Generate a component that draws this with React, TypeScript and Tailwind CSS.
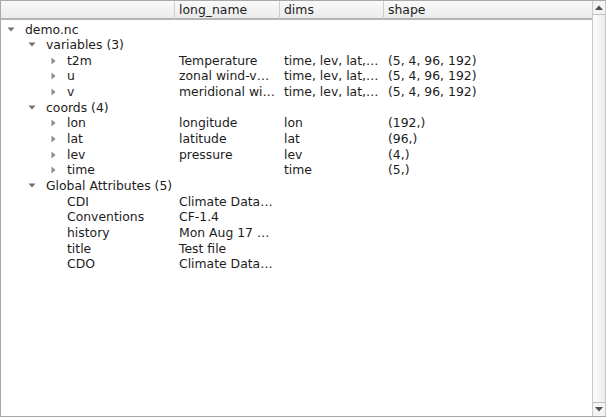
const font = { fontFamily: '"DejaVu Sans", Verdana, sans-serif' };

type Row = {
  depth: number;
  arrow?: 'open' | 'closed';
  name: string;
  longName?: string;
  dims?: string;
  shape?: string;
};

const rows: Row[] = [
  { depth: 0, arrow: 'open', name: 'demo.nc' },
  { depth: 1, arrow: 'open', name: 'variables (3)' },
  { depth: 2, arrow: 'closed', name: 't2m', longName: 'Temperature', dims: 'time, lev, lat,…', shape: '(5, 4, 96, 192)' },
  { depth: 2, arrow: 'closed', name: 'u', longName: 'zonal wind-v…', dims: 'time, lev, lat,…', shape: '(5, 4, 96, 192)' },
  { depth: 2, arrow: 'closed', name: 'v', longName: 'meridional wi…', dims: 'time, lev, lat,…', shape: '(5, 4, 96, 192)' },
  { depth: 1, arrow: 'open', name: 'coords (4)' },
  { depth: 2, arrow: 'closed', name: 'lon', longName: 'longitude', dims: 'lon', shape: '(192,)' },
  { depth: 2, arrow: 'closed', name: 'lat', longName: 'latitude', dims: 'lat', shape: '(96,)' },
  { depth: 2, arrow: 'closed', name: 'lev', longName: 'pressure', dims: 'lev', shape: '(4,)' },
  { depth: 2, arrow: 'closed', name: 'time', dims: 'time', shape: '(5,)' },
  { depth: 1, arrow: 'open', name: 'Global Attributes (5)' },
  { depth: 2, name: 'CDI', longName: 'Climate Data…' },
  { depth: 2, name: 'Conventions', longName: 'CF-1.4' },
  { depth: 2, name: 'history', longName: 'Mon Aug 17 …' },
  { depth: 2, name: 'title', longName: 'Test file' },
  { depth: 2, name: 'CDO', longName: 'Climate Data…' },
];

const Arrow = ({ kind }: { kind?: 'open' | 'closed' }) => {
  if (!kind) return <span className="w-[20px] shrink-0" />;
  return (
    <span className="w-[20px] shrink-0 flex items-center justify-center">
      {kind === 'open' ? (
        <svg width="8" height="5" viewBox="0 0 8 5">
          <path d="M0.5 0.5 L7.5 0.5 L4 4.5 Z" fill="#6e6e6e" />
        </svg>
      ) : (
        <svg width="5" height="8" viewBox="0 0 5 8">
          <path d="M0.5 0.5 L4.5 4 L0.5 7.5 Z" fill="#8a8a8a" />
        </svg>
      )}
    </span>
  );
};

const App = () => {
  return (
    <div
      className="w-[606px] h-[417px] bg-white flex border-l border-t border-b border-[#a8a8a8] text-[12.4px] text-[#1c1c1c] overflow-hidden"
      style={font}
    >
      <div className="flex-1 flex flex-col">
        <div className="h-[19px] grid grid-cols-[173px_105px_104px_1fr] bg-gradient-to-b from-[#f9f9f9] to-[#ebebeb] border-b-2 border-[#b4b4b4] leading-[18px]">
          <div />
          <div className="border-l border-[#cfcfcf] pl-[4px]">long_name</div>
          <div className="border-l border-[#cfcfcf] pl-[4px]">dims</div>
          <div className="border-l border-[#cfcfcf] pl-[4px]">shape</div>
        </div>
        <div className="flex flex-col pt-[1.5px]">
          {rows.map((r, i) => (
            <div
              key={i}
              className="h-[15.67px] leading-[15.67px] grid grid-cols-[174px_105px_104px_1fr] whitespace-nowrap"
            >
              <div className="flex items-center" style={{ paddingLeft: r.depth * 21 }}>
                <Arrow kind={r.arrow} />
                <span className="ml-[4px]">{r.name}</span>
              </div>
              <div className="pl-[4px]">{r.longName}</div>
              <div className="pl-[4px]">{r.dims}</div>
              <div className="pl-[4px]">{r.shape}</div>
            </div>
          ))}
        </div>
      </div>
      <div className="w-[14px] flex flex-col border-l border-r border-[#c8c8c8] bg-gradient-to-r from-[#fdfdfd] to-[#ececec]">
        <div className="h-[14px] flex items-center justify-center border-b border-[#bdbdbd] bg-[#f4f4f4]">
          <svg width="8" height="5" viewBox="0 0 8 5">
            <path d="M0 5 L4 0.5 L8 5 Z" fill="#4e4e4e" />
          </svg>
        </div>
        <div className="flex-1" />
        <div className="h-[14px] flex items-center justify-center border-t border-[#bdbdbd] bg-[#f4f4f4]">
          <svg width="8" height="5" viewBox="0 0 8 5">
            <path d="M0 0 L8 0 L4 4.5 Z" fill="#4e4e4e" />
          </svg>
        </div>
      </div>
    </div>
  );
};

export default App;
